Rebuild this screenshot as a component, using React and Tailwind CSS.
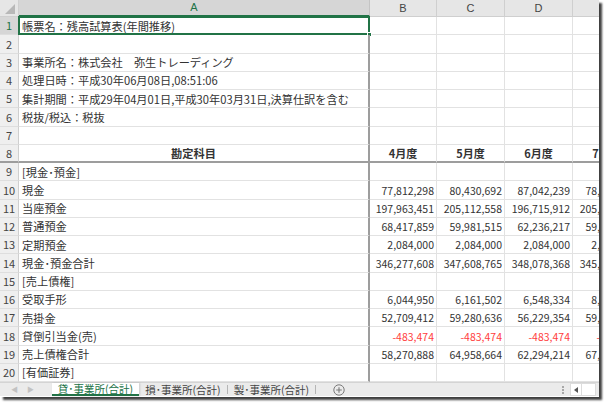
import React from 'react';

const FONT = "font-['Noto_Sans_CJK_JP','Noto_Sans',sans-serif]";

const MONTHS = ['4月度', '5月度', '6月度', '7月度'];

const ROWS = [
  { label: '帳票名：残高試算表(年間推移)' },
  { label: '' },
  { label: '事業所名：株式会社　弥生トレーディング' },
  { label: '処理日時：平成30年06月08日,08:51:06' },
  { label: '集計期間：平成29年04月01日,平成30年03月31日,決算仕訳を含む' },
  { label: '税抜/税込：税抜' },
  { label: '' },
  { label: '勘定科目', head: true, vals: MONTHS },
  { label: '[現金･預金]' },
  { label: '現金', vals: ['77,812,298', '80,430,692', '87,042,239', '78,502,117'] },
  { label: '当座預金', vals: ['197,963,451', '205,112,558', '196,715,912', '205,845,330'] },
  { label: '普通預金', vals: ['68,417,859', '59,981,515', '62,236,217', '59,124,671'] },
  { label: '定期預金', vals: ['2,084,000', '2,084,000', '2,084,000', '2,084,000'] },
  { label: '現金･預金合計', vals: ['346,277,608', '347,608,765', '348,078,368', '345,556,118'] },
  { label: '[売上債権]' },
  { label: '受取手形', vals: ['6,044,950', '6,161,502', '6,548,334', '8,014,820'] },
  { label: '売掛金', vals: ['52,709,412', '59,280,636', '56,229,354', '59,771,245'] },
  { label: '貸倒引当金(売)', red: true, vals: ['-483,474', '-483,474', '-483,474', '-483,474'] },
  { label: '売上債権合計', vals: ['58,270,888', '64,958,664', '62,294,214', '67,302,591'] },
  { label: '[有価証券]' },
];

const COLS = ['w-[67px]', 'w-[68px]', 'w-[68px]', 'w-[68px]'];

const ColumnHeader = () => (
  <div className="flex h-[17px] shrink-0 bg-[#e6e6e6] text-[11px] text-[#444]">
    <div className="relative w-[19px] shrink-0 border-r border-b border-[#cfcfcf]">
      <svg width="19" height="17" className="absolute left-0 top-0">
        <polygon points="15,4 15,14 5,14" fill="#b8b8b8" />
      </svg>
    </div>
    <div className="w-[351px] shrink-0 flex items-center justify-center bg-[#d6d6d6] text-[#217346] border-r border-[#c4c4c4] border-b-2 border-b-[#217346] font-['Liberation_Sans',sans-serif]">
      A
    </div>
    {['B', 'C', 'D', 'E'].map((c, i) => (
      <div
        key={c}
        className={`${COLS[i]} shrink-0 flex items-center justify-center border-r border-b border-[#cfcfcf] font-['Liberation_Sans',sans-serif]`}
      >
        {c}
      </div>
    ))}
  </div>
);

const Row = ({ idx, row }) => {
  const frozen = idx === 8;
  const selected = idx === 1;
  const bottom = frozen ? 'border-b-2 border-b-[#9d9d9d]' : 'border-b border-b-[#e2e2e2]';
  return (
    <div className="flex h-[18.25px] shrink-0">
      <div
        className={`w-[19px] shrink-0 flex items-center justify-center text-[11px] border-r border-[#cfcfcf] ${frozen ? 'border-b-2 border-b-[#9d9d9d]' : 'border-b border-b-[#dedede]'} ${
          selected ? 'bg-[#d6d6d6] text-[#217346]' : 'bg-[#efefef] text-[#444]'
        }`}
      >
        {idx}
      </div>
      <div
        className={`relative w-[351px] shrink-0 flex items-center pt-px text-[11.2px] border-r-2 border-r-[#9d9d9d] ${bottom} text-[#333] whitespace-nowrap ${
          row.head ? 'justify-center font-bold text-[#222]' : 'pl-[3px]'
        }`}
      >
        {row.label}
        {selected && (
          <div className="absolute -left-px -top-px -right-[2px] -bottom-px border-2 border-[#217346]">
            <div className="absolute -right-[4px] -bottom-[4px] w-[5px] h-[5px] bg-[#217346] border border-white" />
          </div>
        )}
      </div>
      {COLS.map((w, i) => (
        <div
          key={i}
          className={`${w} shrink-0 flex items-center pt-px border-r border-r-[#e2e2e2] ${bottom} whitespace-nowrap overflow-hidden ${
            row.head ? 'justify-center font-bold text-[#222] text-[11px]' : 'justify-end pr-[2px] text-[10.5px]'
          } ${row.red ? 'text-[#ff3d3d]' : 'text-[#333]'}`}
        >
          {row.vals ? row.vals[i] : ''}
        </div>
      ))}
    </div>
  );
};

const SheetTabs = () => (
  <div className="flex h-[14px] shrink-0 items-stretch bg-[#ebebeb] border-t border-[#d4d4d4] text-[10.5px] text-[#444]">
    <div className="w-[52px] shrink-0 flex items-center gap-[9px] pl-[11px] text-[7px] text-[#c2c2c2]">
      <span>◀</span>
      <span>▶</span>
    </div>
    <div className="w-[87px] shrink-0 flex items-center justify-center bg-white text-[#217346] border-b-2 border-[#217346] shadow-[1px_0_2px_rgba(0,0,0,0.15)] whitespace-nowrap">
      貸･事業所(合計)
    </div>
    <div className="w-[88px] shrink-0 flex items-center justify-center whitespace-nowrap">損･事業所(合計)</div>
    <div className="my-[2px] w-px bg-[#b5b5b5]" />
    <div className="w-[87px] shrink-0 flex items-center justify-center whitespace-nowrap">製･事業所(合計)</div>
    <div className="my-[2px] w-px bg-[#b5b5b5]" />
    <div className="w-[46px] shrink-0 flex items-center justify-center">
      <svg width="12" height="12" viewBox="0 0 12 12">
        <circle cx="6" cy="6" r="5.2" fill="none" stroke="#7a7a7a" strokeWidth="1" />
        <path d="M6 3.2v5.6M3.2 6h5.6" stroke="#7a7a7a" strokeWidth="1.1" />
      </svg>
    </div>
    <div className="flex-1" />
    <div className="w-[10px] shrink-0 flex flex-col items-center justify-center gap-[1px]">
      <span className="w-[2px] h-[2px] bg-[#a8a8a8]" />
      <span className="w-[2px] h-[2px] bg-[#a8a8a8]" />
      <span className="w-[2px] h-[2px] bg-[#a8a8a8]" />
    </div>
    <div className="w-[2px] shrink-0" />
    <div className="w-[26px] shrink-0 flex bg-white border border-[#dcdcdc] mr-[3px]">
      <div className="w-[11px] flex items-center justify-center border-r border-[#dcdcdc]">
        <svg width="4" height="6" viewBox="0 0 4 6">
          <polygon points="4,0 4,6 0,3" fill="#555" />
        </svg>
      </div>
    </div>
  </div>
);

export default function App() {
  return (
    <div className={`w-[604px] h-[403px] bg-white overflow-hidden ${FONT}`}>
      <div className="w-[599px] h-[397px] flex flex-col overflow-hidden bg-white shadow-[3px_3px_2px_rgba(0,0,0,0.75)]">
        <ColumnHeader />
        {ROWS.map((row, i) => (
          <Row key={i} idx={i + 1} row={row} />
        ))}
        <SheetTabs />
      </div>
    </div>
  );
}
